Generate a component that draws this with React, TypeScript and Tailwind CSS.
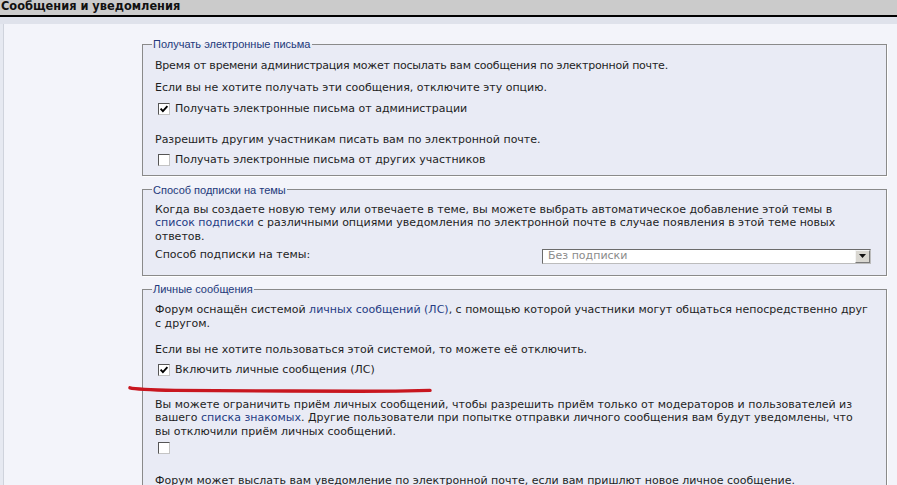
import React from 'react';

function Check({ checked }: { checked?: boolean }) {
  return (
    <span className="flex h-[12px] w-[12px] shrink-0 items-center justify-center border border-t-[#555] border-l-[#555] border-r-[#c4c4c4] border-b-[#c4c4c4] bg-white">
      {checked && (
        <svg width="10" height="10" viewBox="0 0 10 10">
          <path d="M1.6 4.6 L3.9 7.1 L8.4 2.2" fill="none" stroke="#000" strokeWidth="1.9" />
        </svg>
      )}
    </span>
  );
}

function Group({ title, className, children }: { title: string; className: string; children: React.ReactNode }) {
  return (
    <fieldset className={`border border-[#8a8a8a] bg-[#e9ebf5] pl-[12px] pr-[15px] shadow-[1px_1px_0_#fff] ${className}`}>
      <legend className="-ml-[3px] px-px font-['Liberation_Sans',Arial,sans-serif] text-[11px] leading-[14px] text-[#23397a]">
        {title}
      </legend>
      {children}
    </fieldset>
  );
}

const link = 'text-[#253c84]';

export default function App() {
  return (
    <div className="relative h-[485px] w-[897px] overflow-hidden bg-[#e6e9f1] font-['DejaVu_Sans',Verdana,sans-serif] text-[11px] leading-[13.5px] text-[#1e1e1e]">
      {/* Title bar */}
      <div className="h-[17px] border-b-2 border-black bg-[#cbcbcb] pl-px text-[11.4px] font-bold leading-[12px] text-[#111]">
        Сообщения и уведомления
      </div>
      <div className="h-[7px] bg-[#dfe2eb]" />

      <div className="ml-[3px] h-full border-l border-[#cfd3dc] bg-[#f3f4fa] pl-[138px] pr-[10px] pt-[13px]">
        {/* Email */}
        <Group title="Получать электронные письма" className="pb-[7px]">
          <p className="mt-[8px] tracking-[-0.22px]">Время от времени администрация может посылать вам сообщения по электронной почте.</p>
          <p className="mt-[8.5px]">Если вы не хотите получать эти сообщения, отключите эту опцию.</p>
          <label className="ml-[3px] mt-[6.5px] flex h-[15px] items-center gap-[5px]">
            <Check checked />
            <span>Получать электронные письма от администрации</span>
          </label>
          <p className="mt-[17px]">Разрешить другим участникам писать вам по электронной почте.</p>
          <label className="ml-[3px] mt-[6px] flex h-[15px] items-center gap-[5px]">
            <Check />
            <span>Получать электронные письма от других участников</span>
          </label>
        </Group>

        {/* Subscription */}
        <Group title="Способ подписки на темы" className="mt-[7px] pb-[11px]">
          <p className="mt-[6px] whitespace-nowrap">
            Когда вы создаете новую тему или отвечаете в теме, вы можете выбрать автоматическое добавление этой темы в
            <br />
            <span className={link}>список подписки</span> с различными опциями уведомления по электронной почте в случае появления в этой теме новых
            <br />
            ответов.
          </p>
          <div className="mt-[5.5px] flex h-[15px] items-center">
            <span className="-mt-[2px]">Способ подписки на темы:</span>
            <div className="ml-auto flex h-[15px] w-[329px] items-center border border-t-[#6b6b6b] border-l-[#6b6b6b] border-r-[#bcbcbc] border-b-[#bcbcbc] bg-white pl-[5px]">
              <span className="flex-1 text-[#8b8b8b]">Без подписки</span>
              <span className="flex h-[13px] w-[15px] items-center justify-center border border-t-[#f4f4f4] border-l-[#f4f4f4] border-r-[#7a7a7a] border-b-[#7a7a7a] bg-[#d9d7d1]">
                <svg width="7" height="4" viewBox="0 0 7 4">
                  <path d="M0 0 H7 L3.5 4 Z" fill="#111" />
                </svg>
              </span>
            </div>
          </div>
        </Group>

        {/* Private messages */}
        <Group title="Личные сообщения" className="mt-[6.5px] pb-[20px]">
          <p className="mt-[7px] whitespace-nowrap">
            Форум оснащён системой <span className={link}>личных сообщений (ЛС)</span>, с помощью которой участники могут общаться непосредственно друг
            <br />с другом.
          </p>
          <p className="mt-[13px]">Если вы не хотите пользоваться этой системой, то можете её отключить.</p>
          <label className="ml-[3px] mt-[5.5px] flex h-[15px] items-center gap-[5px]">
            <Check checked />
            <span>Включить личные сообщения (ЛС)</span>
          </label>
          <p className="mt-[20.5px] whitespace-nowrap">
            Вы можете ограничить приём личных сообщений, чтобы разрешить приём только от модераторов и пользователей из
            <br />
            вашего <span className={link}>списка знакомых</span>. Другие пользователи при попытке отправки личного сообщения вам будут уведомлены, что
            <br />
            вы отключили приём личных сообщений.
          </p>
          <label className="ml-[3px] mt-[2.5px] flex h-[15px] items-center">
            <Check />
          </label>
          <p className="mt-[18px]">Форум может выслать вам уведомление по электронной почте, если вам пришлют новое личное сообщение.</p>
        </Group>
      </div>

      {/* Hand-drawn red underline */}
      <svg className="pointer-events-none absolute left-0 top-0" width="897" height="485">
        <path
          d="M130 387.8 C136 389.4 150 389.8 175 390.4 C220 390.8 300 391.1 360 391.3 C395 391.3 415 390.8 430 390.4"
          fill="none"
          stroke="#c8161f"
          strokeWidth="3.4"
          strokeLinecap="round"
        />
      </svg>
    </div>
  );
}
